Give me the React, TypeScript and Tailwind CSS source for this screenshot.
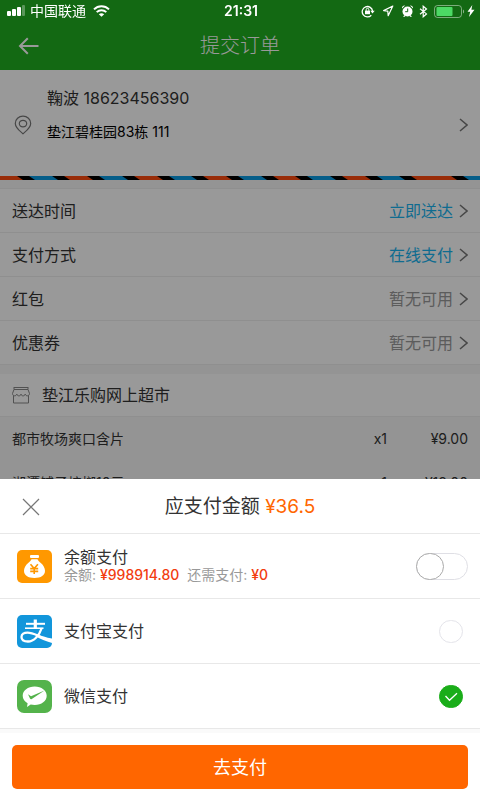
import { useState } from 'react';

interface InfoRow {
  label: string;
  value: string;
  active: boolean;
}

const infoRows: InfoRow[] = [
  { label: '送达时间', value: '立即送达', active: true },
  { label: '支付方式', value: '在线支付', active: true },
  { label: '红包', value: '暂无可用', active: false },
  { label: '优惠券', value: '暂无可用', active: false },
];

const items = [
  { name: '都市牧场爽口含片', count: 'x1', price: '¥9.00' },
  { name: '湘潭铺子槟榔10元', count: 'x1', price: '¥18.00' },
];

// left edge of every black slash in the airmail border
const slashes = [17, 52, 87, 122, 157, 191, 226, 261, 295, 330, 365, 399];

function Chevron() {
  return (
    <svg width="9" height="14" viewBox="0 0 9 14" fill="none" stroke="#777" className="shrink-0">
      <path d="M1 1l7 6-7 6" strokeWidth="1.5" />
    </svg>
  );
}

function AirmailBorder() {
  return (
    <svg className="block h-1 w-full" aria-hidden="true">
      <defs>
        <pattern id="airmail" width="434" height="4" patternUnits="userSpaceOnUse">
          <rect width="434" height="4" fill="#ff4b10" />
          {slashes.map((x, i) => (
            <g key={x}>
              {i % 2 === 0 && <path d={`M${x + 8} 0h34l6 4h-34z`} fill="#0a9de5" />}
              <path d={`M${x} 0h12l6 4h-12z`} fill="#000" />
            </g>
          ))}
        </pattern>
      </defs>
      <rect width="100%" height="4" fill="url(#airmail)" />
    </svg>
  );
}

function StatusBar() {
  return (
    <div className="relative z-20 grid h-[22px] grid-cols-[1fr_auto_1fr] items-center pl-[7px] pr-[5px] text-sm leading-5 text-white">
      <div className="flex items-center">
        <svg width="19" height="12" viewBox="0 0 19 12" fill="#fff">
          <rect y="6" width="4" height="5" rx="1" />
          <rect x="5" y="4" width="4" height="7" rx="1" />
          <rect x="10" y="2" width="4" height="9" rx="1" />
          <rect x="15" y="0" width="3" height="11" rx="1" opacity=".3" />
        </svg>
        <span className="ml-1">中国联通</span>
        <svg width="17" height="12" viewBox="0 0 17 12" fill="none" stroke="#fff" strokeWidth="2" className="ml-[7px]">
          <path d="M1 4.4C5.2.2 11.8.2 16 4.4" />
          <path d="M3.7 7.1c2.7-2.6 6.9-2.6 9.600 0" />
          <path d="M8.5 11.8L5.8 9.2c1.500-1.400 3.900-1.400 5.400 0z" fill="#fff" stroke="none" />
        </svg>
      </div>
      <span className="font-semibold">21:31</span>
      <div className="flex items-center justify-end">
        <svg width="14" height="13" viewBox="0 0 14 13" fill="none" stroke="#fff" strokeWidth="1.3">
          <path d="M10.3 10.2A5.200 5.200 0 1 1 11.6 6.2" />
          <path d="M9.3 5.7h4.400l-2.200 2.800z" fill="#fff" stroke="none" />
          <rect x="4" y="5.6" width="5" height="3.6" fill="#fff" stroke="none" />
          <path d="M5.2 5.800V4.600a1.300 1.300 0 0 1 2.600 0v1.200" strokeWidth="1" />
        </svg>
        <svg width="12" height="12" viewBox="0 0 12 12" fill="none" stroke="#fff" strokeWidth="1.2" className="ml-[7px]">
          <path d="M10.8 1L1.6 5.6l4.200.5.4 4.600z" strokeLinejoin="round" />
        </svg>
        <svg width="13" height="12" viewBox="0 0 13 12" fill="#fff" className="ml-[7px]">
          <circle cx="6.5" cy="6.5" r="5" />
          <path d="M1 3.500A2.500 2.500 0 0 1 4 .6zM12 3.500A2.500 2.500 0 0 0 9 .6zM2 11.800l1.500-1.800 1 1-.7.8zM11 11.800L9.500 10l-1 1 .7.8z" />
          <path d="M6.7 3.500v3.200H4.200" fill="none" stroke="#146914" />
        </svg>
        <svg width="9" height="13" viewBox="0 0 9 13" fill="none" stroke="#fff" strokeWidth="1.2" className="ml-[5px]">
          <path d="M1 3.700l6.500 5.200-3.300 2.900V1.200l3.300 2.800L1 9.300" />
        </svg>
        <svg width="31" height="13" viewBox="0 0 31 13" className="ml-[6px]">
          <rect x=".5" y=".5" width="27" height="12" rx="3" fill="none" stroke="#fff" strokeOpacity=".45" />
          <rect x="2.5" y="2" width="16" height="9" rx="1" fill="#4cd964" />
          <path d="M29 4.500c1.500.5 1.500 3.500 0 4z" fill="#fff" opacity=".5" />
        </svg>
        <svg width="8" height="12" viewBox="0 0 8 12" fill="#fff" className="ml-[2px]">
          <path d="M5.300 0L.5 6.800h2.700L2 12l5.500-7.200H4.400z" />
        </svg>
      </div>
    </div>
  );
}

function BalanceIcon() {
  return (
    <svg width="35" height="33" viewBox="0 0 35 33" className="shrink-0">
      <rect width="35" height="33" rx="5" fill="#ff9800" />
      <rect x="13" y="5" width="9" height="3" rx="1" fill="#fff" />
      <path d="M14.500 9.300h6c.5 1.600 2 2.500 3.600 3.900 2.200 2 3.900 4.500 3.900 7.600 0 4.600-4 7.200-10.500 7.200S7 25.400 7 20.800c0-3.100 1.700-5.600 3.900-7.600 1.600-1.400 3.100-2.300 3.600-3.900z" fill="#fff" />
      <path d="M13.500 14.300l3.700 4.300 3.700-4.300M13.200 18.600h8M13.200 21.400h8M17.200 18.600v5.400" fill="none" stroke="#ff9800" strokeWidth="1.6" />
    </svg>
  );
}

function AlipayIcon() {
  return (
    <svg width="35" height="33" viewBox="0 0 35 33" className="shrink-0">
      <rect width="35" height="33" rx="5" fill="#1296db" />
      <g fill="none" stroke="#fff">
        <path d="M9 8.800h19" strokeWidth="2" />
        <path d="M8 13.200h18.500" strokeWidth="1.6" />
        <path d="M18.300 4.500v8.500" strokeWidth="3.2" />
        <path d="M24.500 13.500C22.500 20 17 26.500 11 26.500c-4 0-6.500-1.700-6.500-4.500 0-2.700 2.500-4.400 6-4.400 4.500 0 8 2 13 4.100" strokeWidth="2.3" />
      </g>
      <path d="M19.500 19.200c5 1.600 9.500 3.200 15.500 4.400V28c-6.500-1.700-11.500-3.900-16.500-6.700z" fill="#fff" />
    </svg>
  );
}

function WechatIcon() {
  return (
    <svg width="35" height="33" viewBox="0 0 35 33" className="shrink-0">
      <rect width="35" height="33" rx="7" fill="#54b34b" />
      <path d="M17.700 6.500c6.800 0 12 4 12 9.200s-5.200 9.300-12 9.300c-1.400 0-2.800-.2-4-.5L10 27l.6-3.800c-3-1.700-4.900-4.400-4.900-7.500 0-5.200 5.200-9.200 12-9.200z" fill="#fff" />
      <path d="M11 14.300l3 1.900 13.500-5.600-12.700 8.500c-.8.500-1.500.2-1.800-.5z" fill="#54b34b" />
    </svg>
  );
}

function PayRadio({ id, checked, onChange }: { id: string; checked: boolean; onChange: () => void }) {
  return (
    <span className="mr-[5px] grid items-center">
      <input
        id={id}
        type="radio"
        name="pay"
        checked={checked}
        onChange={onChange}
        className="col-start-1 row-start-1 h-[23px] w-[24px] appearance-none rounded-full border border-[#e4e4ea] bg-white checked:border-[#1aad19] checked:bg-[#1aad19]"
      />
      {checked && (
        <svg width="24" height="23" viewBox="0 0 24 23" fill="none" stroke="#fff" className="pointer-events-none col-start-1 row-start-1">
          <path d="M6.500 11l4 4.300 7.500-7" strokeWidth="1.3" />
        </svg>
      )}
    </span>
  );
}

export default function App() {
  const [useBalance, setUseBalance] = useState(false);
  const [method, setMethod] = useState('wechat');

  return (
    <div className="min-h-screen bg-[#f7f7f7] font-['Inter','Noto_Sans_CJK_SC',sans-serif] text-[#333]">
      {/* Header */}
      <header className="bg-[#21af21]">
        <StatusBar />
        <div className="grid h-12 grid-cols-[1fr_auto_1fr] items-center px-[18px]">
          <button type="button" aria-label="返回" className="justify-self-start">
            <svg width="21" height="18" viewBox="0 0 21 18" fill="none" stroke="#fff" strokeWidth="2">
              <path d="M20.500 9H2M9.800 1.300L2 9l7.800 7.700" />
            </svg>
          </button>
          <h1 className="text-xl font-light text-white">提交订单</h1>
        </div>
      </header>

      <main>
        {/* Address */}
        <section className="bg-white">
          <a href="#address" className="flex items-center px-3 pt-4 pb-3">
            <svg width="18" height="20" viewBox="0 0 18 20" fill="none" stroke="#777" strokeWidth="1.2" className="ml-[2px] shrink-0">
              <path d="M9 18.800C6.500 16.500 1.300 12.800 1.300 8.400a7.700 7.200 0 0 1 15.400 0c0 4.400-5.200 8.100-7.700 10.400z" />
              <ellipse cx="9" cy="8.6" rx="3.7" ry="3.3" />
            </svg>
            <div className="ml-[15px] flex-1 pb-[22px]">
              <p className="text-base leading-6">鞠波 18623456390</p>
              <p className="mt-3 text-sm leading-5 text-black">垫江碧桂园83栋 111</p>
            </div>
            <Chevron />
          </a>
          <AirmailBorder />
        </section>

        {/* Order options */}
        <section className="mt-2 border-t border-[#eee] bg-white">
          {infoRows.map((row) => (
            <a key={row.label} href="#option" className="flex h-11 items-center border-b border-[#eee] px-3 text-base">
              <span className="flex-1">{row.label}</span>
              <span className={row.active ? 'mr-[6px] text-[#19b4f0]' : 'mr-[6px] text-[#999]'}>{row.value}</span>
              <Chevron />
            </a>
          ))}
        </section>

        {/* Shop and items */}
        <section className="mt-[9px]">
          <h2 className="flex h-[43px] items-center border-b border-[#eee] bg-white px-3 text-base">
            <svg width="18" height="18" viewBox="0 0 18 18" fill="none" stroke="#888">
              <path d="M2 1.500h14M2 3.500h14M2 1v2.500L.5 7.500M16 1v2.500l1.500 4M1.500 9.500v7.500h15V9.500" />
              <path d="M.5 7.500c0 3 4 3 4.300.5.300 2.500 4 2.500 4.200 0 .2 2.500 3.900 2.500 4.200 0 .3 2.500 4.300 2.500 4.300-.5" />
            </svg>
            <span className="ml-3">垫江乐购网上超市</span>
          </h2>
          <ul>
            {items.map((item) => (
              <li key={item.name} className="flex h-11 items-center px-3 text-sm">
                <span className="flex-1">{item.name}</span>
                <span>{item.count}</span>
                <span className="w-[81px] text-right">{item.price}</span>
              </li>
            ))}
          </ul>
        </section>
      </main>

      <div className="fixed inset-0 z-10 bg-black/40" />

      {/* Payment sheet */}
      <section role="dialog" aria-label="支付" className="fixed inset-x-0 bottom-0 z-30 bg-white">
        <div className="grid h-[55px] grid-cols-[1fr_auto_1fr] items-center border-b border-[#e8e8e8] px-[22px] pt-[2px]">
          <button type="button" aria-label="关闭" className="justify-self-start">
            <svg width="18" height="18" viewBox="0 0 18 18" fill="none" stroke="#777" strokeWidth="1.2">
              <path d="M1 1l16 16M17 1L1 17" />
            </svg>
          </button>
          <h2 className="text-[19px]">
            应支付金额 <span className="text-[#ff6600]">¥36.5</span>
          </h2>
        </div>

        <label htmlFor="balance" className="flex h-[65px] items-center border-b border-[#e8e8e8] pl-[17px] pr-3">
          <BalanceIcon />
          <div className="ml-3 flex-1 pb-[2px]">
            <p className="text-base leading-5">余额支付</p>
            <p className="flex gap-2 text-sm leading-4 text-[#999]">
              <span>余额: <span className="font-medium text-[#f23c0f]">¥998914.80</span></span>
              <span>还需支付: <span className="font-medium text-[#f23c0f]">¥0</span></span>
            </p>
          </div>
          <span className="grid items-center">
            <input
              id="balance"
              type="checkbox"
              role="switch"
              checked={useBalance}
              onChange={() => setUseBalance(!useBalance)}
              className="peer col-start-1 row-start-1 h-[27px] w-[52px] appearance-none rounded-full border border-[#dfdfe5] bg-white checked:bg-[#1aad19]"
            />
            <span className="pointer-events-none col-start-1 row-start-1 h-[27px] w-7 rounded-full border border-[#aaa] bg-white peer-checked:justify-self-end" />
          </span>
        </label>

        <label htmlFor="alipay" className="flex h-[65px] items-center border-b border-[#e8e8e8] pl-[17px] pr-3">
          <AlipayIcon />
          <span className="ml-3 flex-1 text-base">支付宝支付</span>
          <PayRadio id="alipay" checked={method === 'alipay'} onChange={() => setMethod('alipay')} />
        </label>

        <label htmlFor="wechat" className="flex h-[65px] items-center border-b border-[#e8e8e8] pl-[17px] pr-3">
          <WechatIcon />
          <span className="ml-3 flex-1 text-base">微信支付</span>
          <PayRadio id="wechat" checked={method === 'wechat'} onChange={() => setMethod('wechat')} />
        </label>

        <div className="border-t-4 border-[#fafafa] px-3 pt-3 pb-[11px]">
          <button type="button" className="h-11 w-full rounded-[5px] bg-[#ff6600] pt-[2px] text-lg text-white">
            去支付
          </button>
        </div>
      </section>
    </div>
  );
}
